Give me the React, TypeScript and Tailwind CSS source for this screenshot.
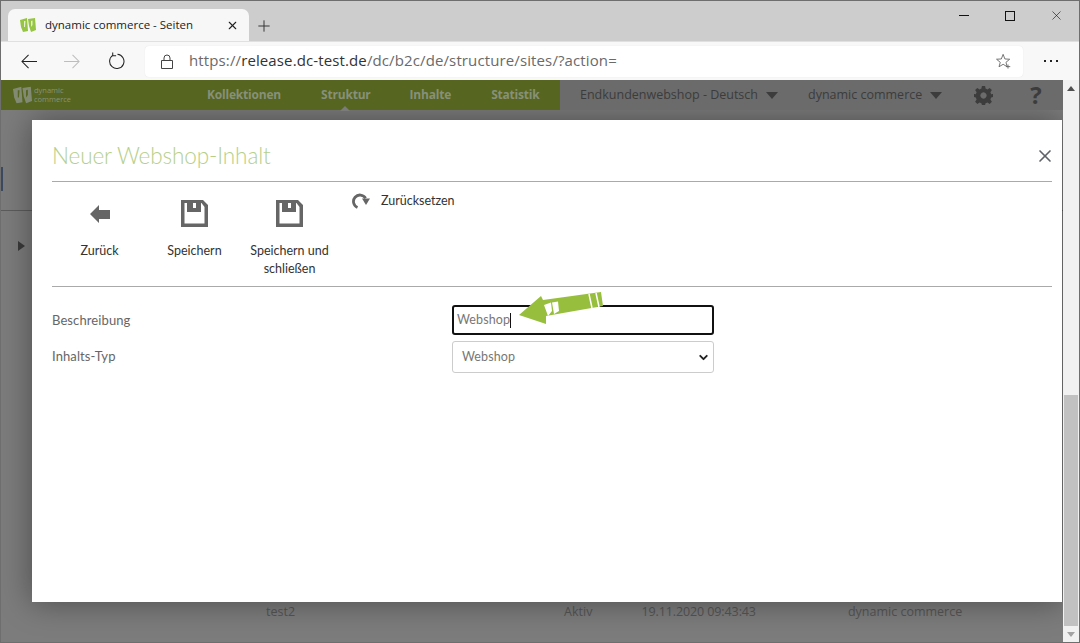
import { ChevronDown, Plus, X } from "lucide-react";

const openSans = "font-['Open_Sans',sans-serif]";
const lato = "font-['Lato',sans-serif]";

function LogoMark({ color, cut }: { color: string; cut: string }) {
  return (
    <svg viewBox="0 0 16 14" className="w-full h-full">
      <path d="M0 2 L7 0 L8 13 L3 14 L1 9 Z" fill={color} />
      <path d="M8 1 L15 0 L16 12 L11 14 L9 8 Z" fill={color} />
      <path d="M4 3 L5.5 3 L5 9 L4 9 Z M11 3 L12.5 2.5 L12.5 7 L11 9 Z" fill={cut} />
    </svg>
  );
}

function SaveIcon() {
  return (
    <svg viewBox="0 0 27 27" className="w-[27px] h-[27px]" fill="#666">
      <path
        fillRule="evenodd"
        d="M0 0 H22 L27 5 V27 H0 Z M3.5 3 V23.5 H23.5 V7 L20.5 3 H20 V12 H6 V3 Z M12 3 V8 H15 V3 Z"
      />
    </svg>
  );
}

function ToolButton({ label, icon }: { label: React.ReactNode; icon: React.ReactNode }) {
  return (
    <div className="w-[95px] shrink-0 flex flex-col items-center">
      <div className="h-[27px] flex items-center justify-center">{icon}</div>
      <div className="mt-[15px] text-[12.5px] leading-[18px] text-center text-[#333]">{label}</div>
    </div>
  );
}

function Caret({ color }: { color: string }) {
  return (
    <svg viewBox="0 0 12 7" className="w-[12px] h-[7px]">
      <path d="M0 0 H12 L6 7 Z" fill={color} />
    </svg>
  );
}

function BrowserChrome() {
  return (
    <>
      <div className="h-[40px] bg-[#cdcdcd] flex items-end relative">
        <div className="ml-[7px] w-[241px] h-[32px] bg-[#f7f7f7] rounded-t-[7px] flex items-center pl-[12px] pr-[10px]">
          <div className="w-[16px] h-[14px] shrink-0">
            <LogoMark color="#96c443" cut="#e4f0cf" />
          </div>
          <span className={`ml-[9px] text-[11.5px] text-[#222] flex-1 whitespace-nowrap ${openSans}`}>
            dynamic commerce - Seiten
          </span>
          <X size={13} strokeWidth={2} className="text-[#222]" />
        </div>
        <Plus size={18} strokeWidth={1.3} className="ml-[6px] mb-[6px] text-[#333]" />
        <div className="absolute right-0 top-0 h-[29px] flex items-center text-[#111]">
          <div className="w-[46px] flex justify-center"><div className="w-[10px] h-px bg-[#111]" /></div>
          <div className="w-[46px] flex justify-center">
            <div className="w-[10px] h-[10px] border border-[#111]" />
          </div>
          <div className="w-[46px] flex justify-center"><X size={15} strokeWidth={1} /></div>
        </div>
      </div>
      <div className="h-[39px] bg-[#f8f8f8] border-t border-[#e0e0e0] flex items-center">
        <svg viewBox="0 0 18 16" className="ml-[20px] w-[17px] h-[15px]" fill="none" stroke="#222" strokeWidth="1.1">
          <path d="M1 8 H17 M8 1 L1 8 L8 15" />
        </svg>
        <svg viewBox="0 0 18 16" className="ml-[26px] w-[17px] h-[15px]" fill="none" stroke="#bdbdbd" strokeWidth="1.1">
          <path d="M0 8 H16 M9 1 L16 8 L9 15" />
        </svg>
        <svg viewBox="0 0 18 18" className="ml-[27px] w-[17px] h-[18px]" fill="none" stroke="#222" strokeWidth="1.1">
          <path d="M5.5 2.8 A7.6 7.6 0 1 0 10 1.8 M5 0 V3.4 H8.6" />
        </svg>
        <div className="ml-[20px] w-[878px] h-[31px] bg-white rounded-[4px] shadow-[0_0_1px_rgba(0,0,0,0.12)] flex items-center relative">
          <svg viewBox="0 0 12 15" className="ml-[16px] w-[12px] h-[15px]" fill="none" stroke="#444" strokeWidth="1">
            <path d="M3 6.5 V4 A3 3 0 0 1 9 4 V6.5 M0.5 6.5 H11.5 V14.5 H0.5 Z" />
          </svg>
          <span className={`ml-[16px] -mt-[2px] text-[15px] text-[#6a6a6a] tracking-[0.12px] whitespace-nowrap ${openSans}`}>
            https://<span className="text-[#333]">release.dc-test.de</span>/dc/b2c/de/structure/sites/?action=
          </span>
          <svg viewBox="0 0 18 17" className="absolute right-[11px] top-[7px] w-[16px] h-[16px]" fill="none" stroke="#666" strokeWidth="1">
            <path d="M8 1 L10 6.2 L15.4 6.5 L11.2 10 L12.6 15 L8 12.2 L3.4 15 L4.8 10 L0.6 6.5 L6 6.2 Z" />
            <path d="M13.5 12.5 V17 M11.2 14.8 H16" />
          </svg>
        </div>
        <div className="ml-[21px] flex gap-[4px]">
          <span className="w-[2px] h-[2px] bg-[#222]" />
          <span className="w-[2px] h-[2px] bg-[#222]" />
          <span className="w-[2px] h-[2px] bg-[#222]" />
        </div>
      </div>
    </>
  );
}

function PageBehind() {
  return (
    <div className="flex h-[563px]">
      <div className="flex-1 flex flex-col bg-[#7c7c7c] relative overflow-hidden">
        <div className={`relative z-10 h-[30px] flex font-bold text-[12px] tracking-[-0.2px] ${openSans}`}>
          <div className="w-[559px] shrink-0 bg-[#56651f] flex items-center whitespace-nowrap">
            <div className="ml-[12px] w-[19px] h-[18px] shrink-0 opacity-80">
              <LogoMark color="#8f9488" cut="#56651f" />
            </div>
            <div className="ml-[2px] w-[37px] shrink-0 text-[7.5px] leading-[9px] tracking-normal font-normal text-[#8b9277]">
              dynamic<br />commerce
            </div>
            <span className="ml-[136px] text-[#87907a]">Kollektionen</span>
            <span className="ml-[40px] text-[#87907a] relative">
              Struktur
              <span className="absolute left-[19px] bottom-[-7px] w-0 h-0 border-x-[5px] border-x-transparent border-b-[5px] border-b-[#7b7b7b]" />
            </span>
            <span className="ml-[39px] text-[#87907a]">Inhalte</span>
            <span className="ml-[40px] text-[#87907a]">Statistik</span>
          </div>
          <div className="flex-1 bg-[#6b6b6b] flex items-center font-normal tracking-normal text-[#3c3c3c] text-[12.5px] whitespace-nowrap">
            <span className="ml-[20px]">Endkundenwebshop - Deutsch</span>
            <span className="ml-[8px]"><Caret color="#3c3c3c" /></span>
            <span className="ml-[30px]">dynamic commerce</span>
            <span className="ml-[8px]"><Caret color="#3c3c3c" /></span>
            <svg viewBox="0 0 24 24" className="ml-[32px] w-[19px] h-[19px] shrink-0" fill="#3c3c3c">
              <path
                fillRule="evenodd"
                d="M10 0 H14 L14.6 3.3 L17 4.3 L19.8 2.4 L22.6 5.2 L20.7 8 L21.7 10.4 L24 10 V14 L21.7 14.6 L20.7 17 L22.6 19.8 L19.8 22.6 L17 20.7 L14.6 21.7 L14 24 H10 L9.4 21.7 L7 20.7 L4.2 22.6 L1.4 19.8 L3.3 17 L2.3 14.6 L0 14 V10 L2.3 10.4 L3.3 8 L1.4 5.2 L4.2 2.4 L7 4.3 L9.4 3.3 Z M12 8 A4 4 0 1 0 12.01 8 Z"
              />
            </svg>
            <span className="ml-[37px] text-[24px] leading-[30px] font-bold text-[#3c3c3c]">?</span>
          </div>
        </div>
        <div className="h-[57px]" />
        <div className="h-[24px] w-[2px] bg-[#3b4a60]" />
        <div className="h-[19px]" />
        <div className="h-px bg-[#5c5c5c]" />
        <svg viewBox="0 0 7 10" className="ml-[17px] mt-[30px] w-[7px] h-[10px]">
          <path d="M0 0 L7 5 L0 10 Z" fill="#3a3a3a" />
        </svg>
        <div className="flex-1" />
        <div className={`h-[41px] flex text-[12.5px] text-[#555] pt-[1px] whitespace-nowrap ${openSans}`}>
          <span className="ml-[265px]">test2</span>
          <span className="ml-[269px]">Aktiv</span>
          <span className="ml-[49px] tracking-[-0.1px]">19.11.2020 09:43:43</span>
          <span className="ml-[92px]">dynamic commerce</span>
        </div>
      </div>
      <div className="relative z-10 w-[16px] bg-[#f1f1f1] flex flex-col items-center">
        <div className="h-[17px] flex items-center"><svg viewBox="0 0 8 5" className="w-[8px] h-[5px]"><path d="M0 5 L4 0 L8 5 Z" fill="#505050" /></svg></div>
        <div className="flex-1" />
        <div className="w-[14px] h-[231px] bg-[#c1c1c1]" />
        <div className="h-[17px] flex items-center"><svg viewBox="0 0 8 5" className="w-[8px] h-[5px]"><path d="M0 0 L4 5 L8 0 Z" fill="#a3a3a3" /></svg></div>
      </div>
    </div>
  );
}

function Modal() {
  return (
    <div className={`absolute left-[31px] top-[119px] w-[1030px] h-[482px] bg-white shadow-[0_0_30px_rgba(0,0,0,0.4)] pl-[20px] pr-[10px] ${lato}`}>
      <div className="h-[61px] flex items-center justify-between">
        <h2 className="mt-[11px] text-[22.5px] font-light tracking-[-0.1px] text-[#b5cf8b]">Neuer Webshop-Inhalt</h2>
        <X size={20} strokeWidth={2} className="mt-[11px] mr-[-3px] text-[#5f6368]" />
      </div>
      <div className="h-[106px] border-y border-[#aaa] flex pt-[18px]">
        <ToolButton
          label="Zurück"
          icon={
            <svg viewBox="0 0 20 18" className="w-[20px] h-[18px]">
              <path d="M0 9 L9 0 V5 H20 V14 H9 V18 Z" fill="#666" />
            </svg>
          }
        />
        <ToolButton label="Speichern" icon={<SaveIcon />} />
        <ToolButton label={<>Speichern und<br />schließen</>} icon={<SaveIcon />} />
        <div className="ml-[15px] -mt-[7px] h-[16px] flex items-center text-[12.5px] text-[#333]">
          <svg viewBox="0 0 19 16" className="w-[19px] h-[16px]" fill="none">
            <path d="M5.5 14.5 A6.5 6.5 0 1 1 13.6 5.2" stroke="#666" strokeWidth="2.8" />
            <path d="M10 5.5 H18 L14 12 Z" fill="#666" />
          </svg>
          <span className="ml-[10px]">Zurücksetzen</span>
        </div>
      </div>
      <div className="mt-[18px] flex items-center h-[30px] text-[13px] tracking-[0.1px] text-[#666] relative">
        <span className="w-[400px] pt-[1px]">Beschreibung</span>
        <div className="w-[262px] h-[30px] border-2 border-[#111] rounded-[3px] flex items-center pl-[3px] pt-[1px] text-[12.5px] text-[#777]">
          Webshop<span className="w-px h-[15px] bg-[#111]" />
        </div>
        <svg viewBox="0 0 95 42" className="absolute left-[463px] top-[-17px] w-[95px] h-[42px]">
          <path d="M4 27 L26 8 L28 12 L86 4 L88 18 L31 28 L31 36 Z" fill="#97bf3d" />
          <path d="M74 6 L77 20 M81 5 L84 19" stroke="#fff" strokeWidth="1.5" />
          <path d="M29 17 L36 14.5 L37 23 L33 28 Z M37 14.5 L43 13.5 L44 23 L39 26 Z" fill="#fff" />
        </svg>
      </div>
      <div className="mt-[6px] flex items-center h-[32px] text-[13px] tracking-[0.1px] text-[#666]">
        <span className="w-[400px]">Inhalts-Typ</span>
        <div className="w-[262px] h-[32px] border border-[#ccc] rounded-[3px] flex items-center justify-between pl-[9px] pr-[3px] pt-[1px] text-[12.5px] text-[#777]">
          Webshop
          <ChevronDown size={13} strokeWidth={3.5} className="text-[#222]" />
        </div>
      </div>
    </div>
  );
}

export default function App() {
  return (
    <div className="w-[1080px] h-[643px] overflow-hidden relative bg-white border border-[#6e6e6e] box-border">
      <BrowserChrome />
      <PageBehind />
      <Modal />
    </div>
  );
}
